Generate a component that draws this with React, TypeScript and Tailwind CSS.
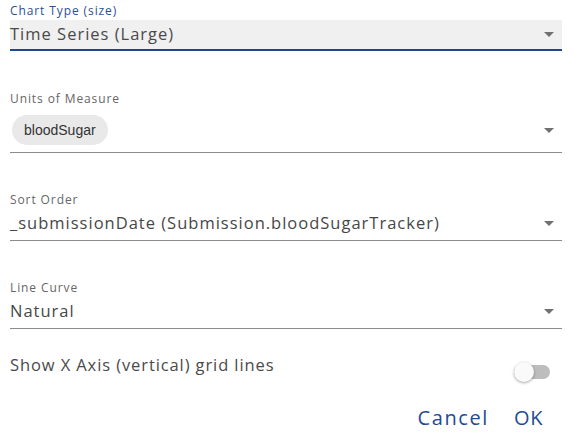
import { useState } from "react";

const font = { fontFamily: '"Open Sans", "Liberation Sans", sans-serif' };

const Arrow = () => (
  <svg width="10" height="5" viewBox="0 0 10 5" className="shrink-0">
    <path d="M0 0 L10 0 L5 5 Z" fill="#707070" />
  </svg>
);

const SelectField = ({ label, value }: { label: string; value: string }) => (
  <div className="flex flex-col">
    <span className="text-[12px] leading-[14px] tracking-[0.9px] text-[#666]">{label}</span>
    <div className="flex items-center justify-between h-[34px] pr-[8px] border-b border-[#8c8c8c]">
      <span className="text-[16.5px] tracking-[1px] text-[#474747]">{value}</span>
      <Arrow />
    </div>
  </div>
);

export default function App() {
  const [grid, setGrid] = useState(false);

  return (
    <div className="w-[574px] h-[440px] bg-white pl-[10px] pr-[12px] pt-[4px]" style={font}>
      <div className="flex flex-col">
        <span className="text-[12px] leading-[14px] tracking-[0.9px] text-[#2d4f93]">Chart Type (size)</span>
        <div className="flex items-center justify-between h-[31px] mt-[2px] bg-[#f0f0f0] border-b-2 border-[#1f4690] pr-[8px]">
          <span className="text-[16.5px] tracking-[1px] text-[#4a4a4a]">Time Series (Large)</span>
          <Arrow />
        </div>
      </div>

      <div className="flex flex-col mt-[41px]">
        <span className="text-[12px] leading-[14px] tracking-[0.9px] text-[#666]">Units of Measure</span>
        <div className="flex items-center justify-between pt-[9px] pb-[7px] pr-[8px] border-b border-[#8c8c8c]">
          <span
            className="ml-[2px] px-[12px] h-[30px] flex items-center rounded-full bg-[#e9e9e9] text-[14px] text-[#333]"
            style={{ fontFamily: '"Liberation Sans", Arial, sans-serif' }}
          >
            bloodSugar
          </span>
          <Arrow />
        </div>
      </div>

      <div className="mt-[40px]">
        <SelectField label="Sort Order" value="_submissionDate (Submission.bloodSugarTracker)" />
      </div>

      <div className="mt-[40px]">
        <SelectField label="Line Curve" value="Natural" />
      </div>

      <div className="flex justify-between mt-[24px]">
        <span className="text-[16.5px] leading-[24px] tracking-[0.9px] text-[#4a4a4a]">
          Show X Axis (vertical) grid lines
        </span>
        <button
          onClick={() => setGrid(!grid)}
          className="relative mt-[12px] mr-[12px] w-[36px] h-[14px] rounded-full bg-[#bdbdbd]"
        >
          <span className="absolute left-0 -top-[3px] w-[20px] h-[20px] rounded-full bg-[#fafafa] shadow-[0_1px_3px_rgba(0,0,0,0.35)]" />
        </button>
      </div>

      <div className="flex justify-end gap-[25px] mt-[25px] pr-[19px]">
        <span className="text-[20px] leading-[28px] tracking-[1.6px] text-[#1f4a96]">Cancel</span>
        <span className="text-[20px] leading-[28px] tracking-[0.6px] text-[#1f4a96]">OK</span>
      </div>
    </div>
  );
}
